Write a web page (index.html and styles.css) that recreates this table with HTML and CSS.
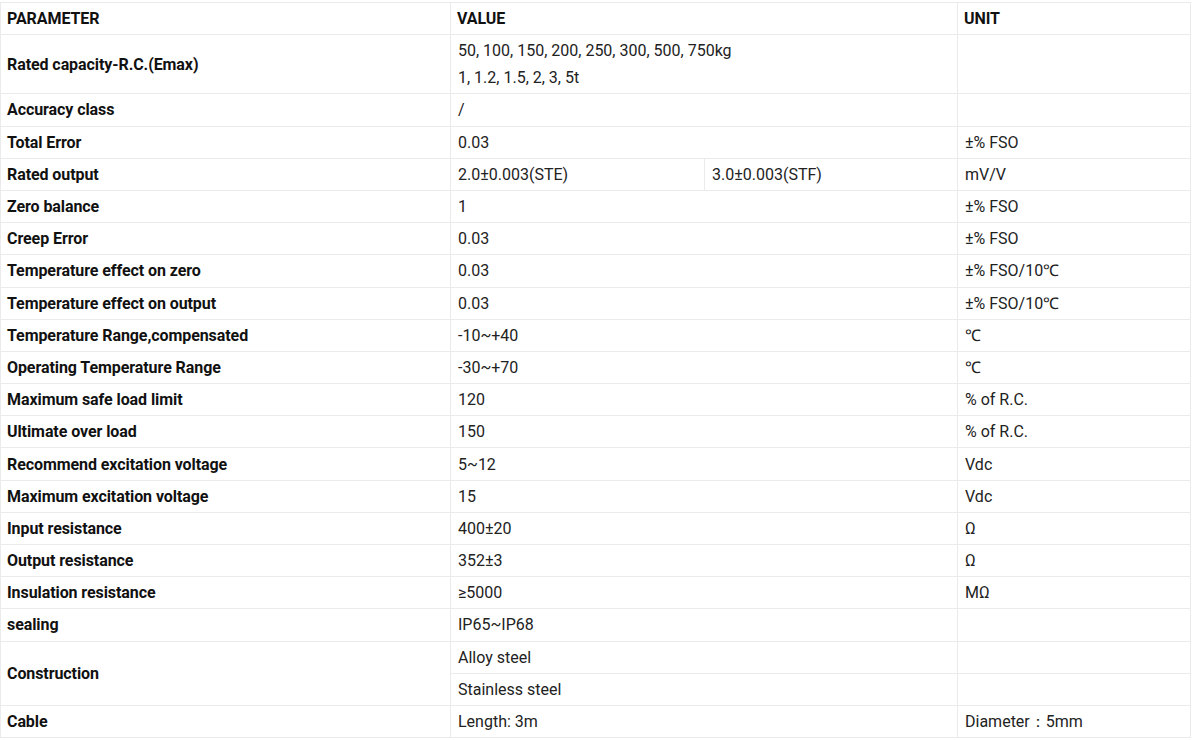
FILE: index.html
```html
<!DOCTYPE html>
<html>
<head>
<meta charset="utf-8">
<link rel="stylesheet" href="styles.css">
</head>
<body>
<table class="spec">
  <colgroup>
    <col class="c1"><col class="c2"><col class="c3"><col class="c4">
  </colgroup>
  <tr class="head"><th>PARAMETER</th><th colspan="2">VALUE</th><th>UNIT</th></tr>
  <tr><th>Rated capacity-R.C.(Emax)</th><td colspan="2">50, 100, 150, 200, 250, 300, 500, 750kg<br>1, 1.2, 1.5, 2, 3, 5t</td><td></td></tr>
  <tr><th>Accuracy class</th><td colspan="2">/</td><td></td></tr>
  <tr><th>Total Error</th><td colspan="2">0.03</td><td>±% FSO</td></tr>
  <tr><th>Rated output</th><td>2.0±0.003(STE)</td><td>3.0±0.003(STF)</td><td>mV/V</td></tr>
  <tr><th>Zero balance</th><td colspan="2">1</td><td>±% FSO</td></tr>
  <tr><th>Creep Error</th><td colspan="2">0.03</td><td>±% FSO</td></tr>
  <tr><th>Temperature effect on zero</th><td colspan="2">0.03</td><td>±% FSO/10℃</td></tr>
  <tr><th>Temperature effect on output</th><td colspan="2">0.03</td><td>±% FSO/10℃</td></tr>
  <tr><th>Temperature Range,compensated</th><td colspan="2">-10~+40</td><td>℃</td></tr>
  <tr><th>Operating Temperature Range</th><td colspan="2">-30~+70</td><td>℃</td></tr>
  <tr><th>Maximum safe load limit</th><td colspan="2">120</td><td>% of R.C.</td></tr>
  <tr><th>Ultimate over load</th><td colspan="2">150</td><td>% of R.C.</td></tr>
  <tr><th>Recommend excitation voltage</th><td colspan="2">5~12</td><td>Vdc</td></tr>
  <tr><th>Maximum excitation voltage</th><td colspan="2">15</td><td>Vdc</td></tr>
  <tr><th>Input resistance</th><td colspan="2">400±20</td><td>Ω</td></tr>
  <tr><th>Output resistance</th><td colspan="2">352±3</td><td>Ω</td></tr>
  <tr><th>Insulation resistance</th><td colspan="2">≥5000</td><td>MΩ</td></tr>
  <tr><th>sealing</th><td colspan="2">IP65~IP68</td><td></td></tr>
  <tr><th rowspan="2">Construction</th><td colspan="2">Alloy steel</td><td></td></tr>
  <tr><td colspan="2">Stainless steel</td><td></td></tr>
  <tr><th>Cable</th><td colspan="2">Length: 3m</td><td>Diameter：5mm</td></tr>
</table>
</body>
</html>
```
FILE: styles.css
```css
html, body {
  margin: 0;
  padding: 0;
  background: #ffffff;
}
body {
  font-family: Roboto, "Liberation Sans", sans-serif;
  font-size: 16px;
  color: #222222;
}
.spec {
  border-collapse: collapse;
  width: 1190px;
  margin-top: 2px;
  table-layout: fixed;
}
.c1 { width: 450px; }
.c2 { width: 254px; }
.c3 { width: 253px; }
.c4 { width: 233px; }
.spec th, .spec td {
  border: 1px solid #ebebeb;
  padding: 2.1px 7px 2.1px 6px;
  line-height: 27px;
  text-align: left;
  vertical-align: middle;
  white-space: nowrap;
}
.spec td {
  font-weight: 400;
  padding-left: 7px;
}
.spec th {
  font-weight: 700;
  color: #111111;
  letter-spacing: -0.08px;
}
```
